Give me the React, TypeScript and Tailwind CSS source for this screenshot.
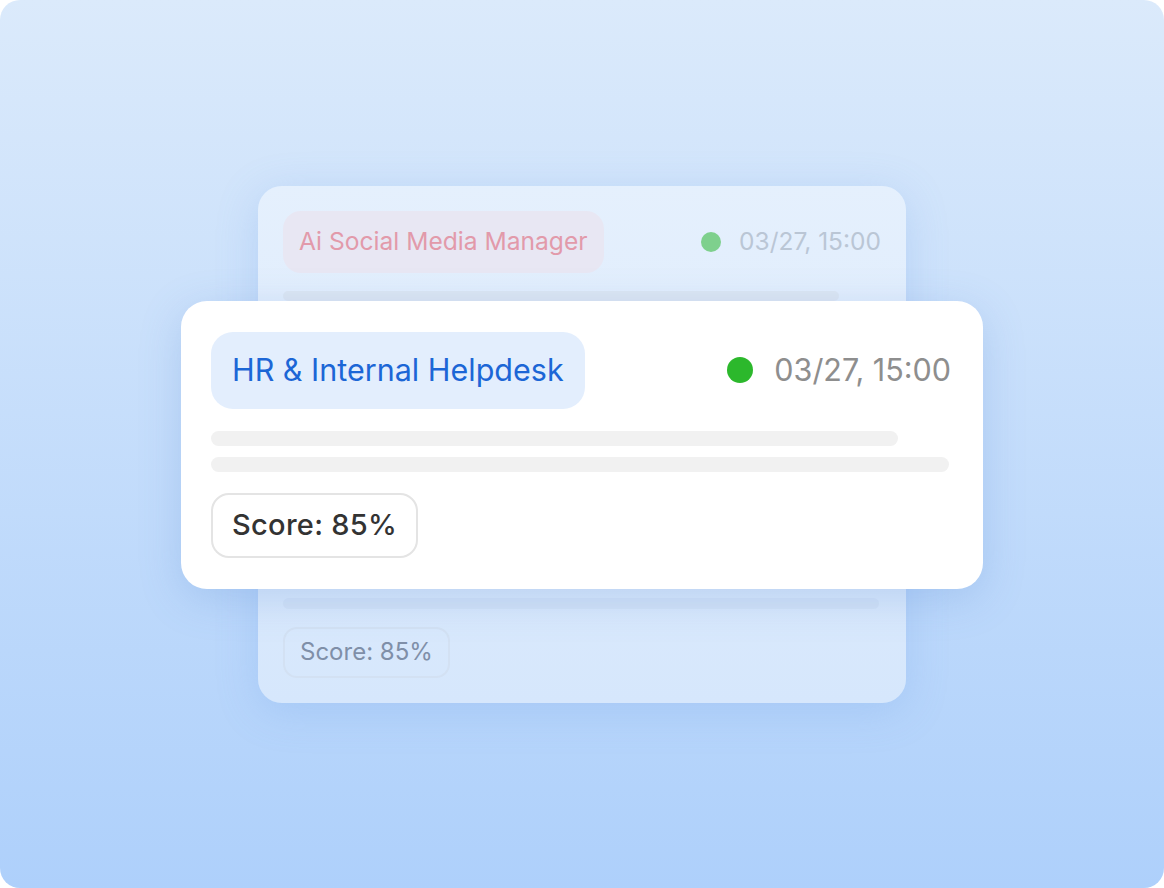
import React from 'react';

const font = { fontFamily: 'Inter, "Liberation Sans", sans-serif' };

const BarLine = ({ className }: { className: string }) => <div className={`rounded-full ${className}`} />;

const FrontCard: React.FC = () => (
  <div className="absolute left-[-77px] top-[115px] w-[802px] h-[288px] rounded-[26px] bg-white px-[30px] pt-[31px] shadow-[0_10px_40px_rgba(90,140,210,0.25)]">
    <div className="flex items-center justify-between">
      <div className="h-[77px] px-[21px] rounded-[22px] bg-[#e3eefd] flex items-center text-[30.5px] text-[#1c66d6]">
        HR &amp; Internal Helpdesk
      </div>
      <div className="flex items-center gap-[21px] pr-[2px]">
        <span className="w-[26px] h-[26px] rounded-full bg-[#2cb82c]" />
        <span className="text-[30.5px] text-[#8e8e8e]">03/27, 15:00</span>
      </div>
    </div>
    <div className="mt-[22px] flex flex-col gap-[11px]">
      <BarLine className="h-[15px] w-[687px] bg-[#f1f1f1]" />
      <BarLine className="h-[15px] w-[738px] bg-[#f1f1f1]" />
    </div>
    <div className="mt-[21px] inline-flex h-[65px] items-center px-[19px] rounded-[18px] border-2 border-[#e4e4e4] text-[29px] font-medium tracking-[0.3px] text-[#333333]">
      Score: 85%
    </div>
  </div>
);

export default function App() {
  return (
    <div className="w-[1164px] h-[888px] bg-white" style={font}>
      <div className="w-full h-full rounded-[20px] bg-gradient-to-b from-[#dbeafb] to-[#aed0fb] flex items-center justify-center">
        <div className="relative w-[648px] h-[517px] rounded-[24px] bg-gradient-to-b from-[#e5f0fd] to-[#d6e7fc] px-[25px] py-[25px] flex flex-col justify-between shadow-[0_8px_40px_rgba(110,160,230,0.25)]">
          <div>
            <div className="flex items-center justify-between">
              <div className="h-[62px] px-[16px] rounded-[18px] bg-[#e8e7f3] flex items-center text-[24.6px] text-[#e29aaa]">
                Ai Social Media Manager
              </div>
              <div className="flex items-center gap-[18px] pl-[4px]">
                <span className="w-[20px] h-[20px] rounded-full bg-[#7ed08d]" />
                <span className="text-[24.5px] text-[#bac6d5]">03/27, 15:00</span>
              </div>
            </div>
            <BarLine className="mt-[18px] h-[10px] w-[556px] bg-[#dce6f3]" />
          </div>
          <div>
            <BarLine className="h-[11px] w-[596px] bg-[#d2e2f7]" />
            <div className="mt-[18px] inline-flex h-[51px] items-center px-[15px] rounded-[14px] border-2 border-[#d3e1f3] text-[24px] text-[#7f8fa8]">
              Score: 85%
            </div>
          </div>
          <FrontCard />
        </div>
      </div>
    </div>
  );
}
